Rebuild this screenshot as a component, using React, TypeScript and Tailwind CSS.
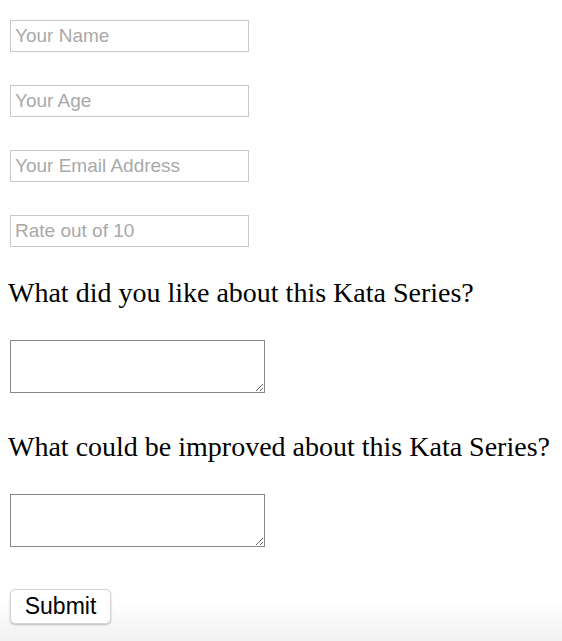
import React from 'react';

const inputClass =
  'block w-[239px] h-[32px] border border-[#c8c8c8] bg-white px-[4px] text-[19px] text-black placeholder:text-[#a9a9a9] outline-none';

const fields = ['Your Name', 'Your Age', 'Your Email Address', 'Rate out of 10'];

export default function App() {
  return (
    <div className="min-h-[641px] w-full bg-white bg-[linear-gradient(to_bottom,transparent_600px,#f2f2f2_641px)] font-['Liberation_Sans',Arial,sans-serif]">
      <form className="flex flex-col pl-[10px] pt-[20px]" onSubmit={(e) => e.preventDefault()}>
        <div className="flex flex-col gap-[33px]">
          {fields.map((f) => (
            <input key={f} type="text" placeholder={f} className={inputClass} />
          ))}
        </div>
        <h2 className="-ml-[2px] mt-[30px] font-['Liberation_Serif','Times_New_Roman',serif] text-[28px] leading-[32px] text-black">
          What did you like about this Kata Series?
        </h2>
        <textarea className="mt-[31px] block h-[53px] w-[255px] border border-[#888888] bg-white outline-none" />
        <h2 className="-ml-[2px] mt-[38px] font-['Liberation_Serif','Times_New_Roman',serif] text-[28px] leading-[32px] text-black">
          What could be improved about this Kata Series?
        </h2>
        <textarea className="mt-[31px] block h-[53px] w-[255px] border border-[#888888] bg-white outline-none" />
        <div className="mt-[42px]">
          <button
            type="submit"
            className="h-[35px] w-[101px] rounded-[5px] border border-[#d4d4d4] bg-white text-[23px] leading-none text-black shadow-[0_1px_2px_rgba(0,0,0,0.25)]"
          >
            Submit
          </button>
        </div>
      </form>
    </div>
  );
}
